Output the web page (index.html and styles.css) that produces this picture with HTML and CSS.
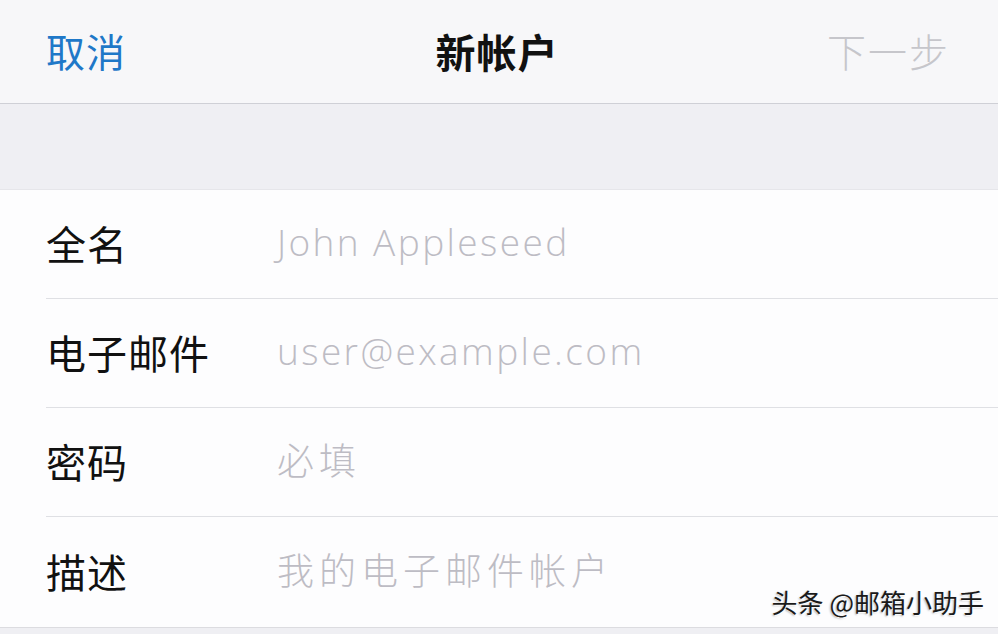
FILE: index.html
```html
<!DOCTYPE html>
<html lang="zh-CN">
	<head>
		<meta charset="UTF-8" />
		<meta name="viewport" content="width=device-width, initial-scale=1.0" />
		<title>新帐户</title>
		<link rel="stylesheet" href="styles.css">
	</head>
	<body>
		<div class="screen">
			<div class="navbar">
				<span class="nav-btn cancel">取消</span>
				<span class="nav-title">新帐户</span>
				<span class="nav-btn next">下一步</span>
			</div>
			<div class="spacer"></div>
			<div class="form-list">
				<div class="row">
					<span class="label">全名</span>
					<span class="placeholder latin">John Appleseed</span>
				</div>
				<div class="row">
					<span class="label">电子邮件</span>
					<span class="placeholder latin">user@example.com</span>
				</div>
				<div class="row">
					<span class="label">密码</span>
					<span class="placeholder">必填</span>
				</div>
				<div class="row last">
					<span class="label">描述</span>
					<span class="placeholder">我的电子邮件帐户</span>
				</div>
				<span class="watermark">头条 @邮箱小助手</span>
			</div>
			<div class="footer"></div>
		</div>
	</body>
</html>
```

FILE: styles.css
```css
/* 基本布局 */
body {
	margin: 0;
	padding: 0;
	font-family: 'Noto Sans CJK SC', 'Noto Sans', sans-serif;
	background-color: #fdfdfe;
}

.screen {
	width: 998px;
	height: 634px;
	overflow: hidden;
	display: flex;
	flex-direction: column;
}

.navbar {
	height: 104px;
	flex-shrink: 0;
	background-color: #f7f7f9;
	border-bottom: 1px solid #cfd0d6;
	display: flex;
	align-items: center;
	justify-content: space-between;
	padding: 0 50px 0 46px;
	position: relative;
	box-sizing: border-box;
}

.nav-btn {
	font-size: 39px;
	line-height: 1;
	margin-top: -2px;
	letter-spacing: 1px;
}

.cancel {
	color: #1f78c8;
}

.next {
	color: #c6c6cb;
	font-weight: 300;
	letter-spacing: 2px;
	margin-right: -2px;
}

.nav-title {
	position: absolute;
	left: 0;
	right: 0;
	text-align: center;
	font-size: 40px;
	font-weight: 700;
	color: #111;
	line-height: 1;
	margin-top: -2px;
	margin-left: -4px;
	letter-spacing: 1px;
	pointer-events: none;
}

.spacer {
	height: 86px;
	flex-shrink: 0;
	background-color: #efeff3;
	border-bottom: 1px solid #e6e6ea;
	box-sizing: border-box;
}

.form-list {
	background-color: #fdfdfe;
	position: relative;
	padding-left: 46px;
}

.row {
	height: 109px;
	display: flex;
	align-items: center;
	border-bottom: 1px solid #dfe0e4;
	box-sizing: border-box;
}

.row.last {
	height: 110px;
	border-bottom: none;
}

.label {
	width: 231px;
	flex-shrink: 0;
	font-size: 40px;
	color: #111;
	line-height: 1;
	margin-top: -2px;
	letter-spacing: 1px;
}

.placeholder {
	font-size: 37px;
	color: #bdbcc4;
	font-weight: 300;
	line-height: 1;
	margin-top: -6px;
	letter-spacing: 5px;
}

.placeholder.latin {
	font-family: 'Open Sans', 'Noto Sans', sans-serif;
	font-weight: 300;
	font-size: 37px;
	letter-spacing: 2.4px;
}

.watermark {
	position: absolute;
	right: 14px;
	bottom: 12px;
	font-size: 26px;
	color: #1a1a1a;
	line-height: 1;
	text-shadow: 1px 1px 1px #ffffff, -1px 1px 2px rgba(0, 0, 0, 0.3);
}

.footer {
	flex: 1;
	background-color: #efeff3;
	border-top: 1px solid #dcdce0;
}
```
